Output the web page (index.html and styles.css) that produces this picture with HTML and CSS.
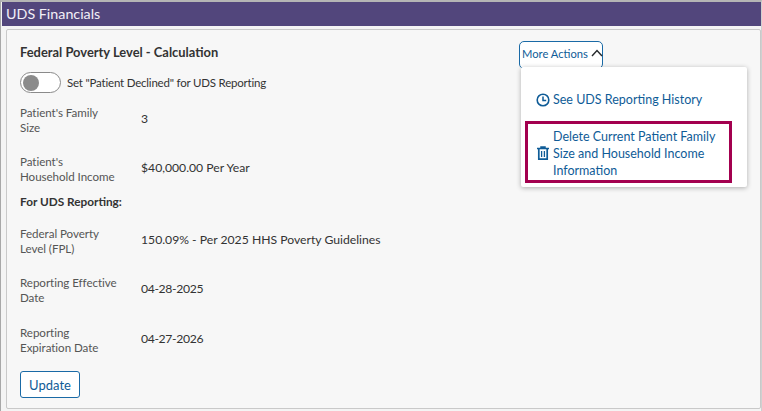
FILE: index.html
```html
<!DOCTYPE html>
<html lang="en">
<head>
<meta charset="utf-8">
<title>UDS Financials</title>
<link rel="stylesheet" href="styles.css">
</head>
<body>
<div class="page">
  <header class="bar">UDS Financials</header>
  <main class="panel">
    <h2 class="title">Federal Poverty Level - Calculation</h2>
    <div class="toggle-row">
      <span class="toggle"><span class="knob"></span></span>
      <span class="toggle-label">Set "Patient Declined" for UDS Reporting</span>
    </div>
    <div class="row r1"><div class="label">Patient's Family Size</div><div class="value">3</div></div>
    <div class="row r2"><div class="label">Patient's Household Income</div><div class="value">$40,000.00 Per Year</div></div>
    <div class="sub">For UDS Reporting:</div>
    <div class="row r3"><div class="label">Federal Poverty Level (FPL)</div><div class="value">150.09% - Per 2025 HHS Poverty Guidelines</div></div>
    <div class="row r4"><div class="label">Reporting Effective Date</div><div class="value date">04-28-2025</div></div>
    <div class="row r5"><div class="label">Reporting Expiration Date</div><div class="value date">04-27-2026</div></div>
    <button class="update">Update</button>

    <button class="more"><span>More Actions</span>
      <svg class="chev" viewBox="0 0 12 8" width="12" height="8"><path d="M1 7l5-5.5L11 7" fill="none" stroke="#26292c" stroke-width="1.4"/></svg>
    </button>
    <div class="menu">
      <a class="item history">
        <svg class="ico" viewBox="0 0 14 14" width="14" height="14"><circle cx="7" cy="7" r="5.8" fill="none" stroke="#0f5c97" stroke-width="1.6"/><path d="M7 3.5V7.4H10.2" fill="none" stroke="#0f5c97" stroke-width="1.5"/></svg>
        <span>See UDS Reporting History</span>
      </a>
      <a class="item del">
        <svg class="ico" viewBox="0 0 14 14" width="14" height="14"><path d="M1 2.5H13M5 2.5V1H9V2.5" fill="none" stroke="#0f5c97" stroke-width="1.5"/><path d="M2.8 3V13.2H11.2V3" fill="none" stroke="#0f5c97" stroke-width="1.7"/><path d="M5.6 5V11M8.4 5V11" stroke="#0f5c97" stroke-width="1.3"/></svg>
        <span>Delete Current Patient Family Size and Household Income Information</span>
      </a>
    </div>
  </main>
</div>
</body>
</html>
```
FILE: styles.css
```css
* { box-sizing: border-box; }
html, body { margin: 0; height: 100%; }
body {
  background: #f4f4f4;
  font-family: "Lato", "Noto Sans", sans-serif;
  font-size: 12px;
  color: #2b2b2b;
  overflow: hidden;
}
.page {
  height: 411px;
  width: 762px;
  border-top: 2px solid #b5b5b5;
  border-left: 1px solid #a8a8a8;
  border-right: 1px solid #d0d0d0;
  display: flex;
  flex-direction: column;
}
.bar {
  height: 24px;
  margin-left: 1px;
  background: #52467c;
  color: #f2eff7;
  font-size: 14.3px;
  line-height: 24px;
  padding-left: 4px;
  flex: none;
}
.panel {
  position: relative;
  flex: 1;
  margin: 3px 0 2px 5px;
  background: #f7f7f7;
  border: 1px solid #c9c9c9;
  border-radius: 2px;
  padding: 14px 13px 0;
}
.title {
  margin: 0;
  font-size: 12.9px;
  font-weight: 700;
  line-height: 16px;
  color: #333;
}
.toggle-row {
  display: flex;
  align-items: center;
  margin-top: 12px;
  height: 21px;
}
.toggle {
  width: 41px;
  height: 21px;
  border: 1px solid #8a8a8a;
  border-radius: 11px;
  background: #fff;
  display: flex;
  align-items: center;
  padding-left: 2px;
}
.knob {
  width: 16px;
  height: 16px;
  border-radius: 50%;
  background: #8b8b8b;
}
.toggle-label {
  margin-left: 6px;
  font-size: 11.5px;
  letter-spacing: -.2px;
  color: #333;
}
.row {
  display: flex;
  align-items: center;
  min-height: 30px;
}
.r1 { margin-top: 12px; }
.r2 { margin-top: 19px; }
.r3 { margin-top: 17px; }
.r4 { margin-top: 19px; }
.r5 { margin-top: 20px; }
.label {
  width: 121px;
  padding-right: 23px;
  flex: none;
  font-size: 11.6px;
  letter-spacing: -.05px;
  line-height: 15px;
  color: #555;
}
.value {
  font-size: 12.2px;
  color: #333;
  margin-bottom: 4px;
}
.date { letter-spacing: -.35px; }
.sub {
  margin-top: 10px;
  font-size: 11.8px;
  font-weight: 700;
  line-height: 15px;
  color: #333;
}
.update {
  display: block;
  margin-top: 16px;
  width: 60px;
  height: 27px;
  background: #fff;
  border: 1px solid #1a6aa6;
  border-radius: 3px;
  color: #0f5c97;
  font: 13px "Lato", "Noto Sans", sans-serif;
  padding: 0;
}
.more {
  position: absolute;
  left: 512px;
  top: 11px;
  width: 84px;
  height: 28px;
  background: #fff;
  border: 1px solid #1a6aa6;
  border-radius: 5px;
  color: #0f5c97;
  font: 11.2px "Lato", "Noto Sans", sans-serif;
  padding: 0 0 4px 2px;
  display: flex;
  align-items: center;
  gap: 3px;
  white-space: nowrap;
}
.chev { flex: none; }
.menu {
  position: absolute;
  left: 514px;
  top: 37px;
  width: 226px;
  height: 120px;
  background: #fff;
  border-radius: 2px;
  box-shadow: 0 1px 5px rgba(0,0,0,.3);
}
.item {
  display: flex;
  align-items: center;
  color: #0f5c97;
  font-size: 12.5px;
  line-height: 17px;
}
.ico { flex: none; margin-right: 3px; }
.history {
  margin: 24px 0 0 15px;
}
.del {
  margin: 13px 0 0 4px;
  width: 207px;
  height: 62px;
  border: 3px solid #a3004f;
  padding: 2px 0 0 8px;
}
```
